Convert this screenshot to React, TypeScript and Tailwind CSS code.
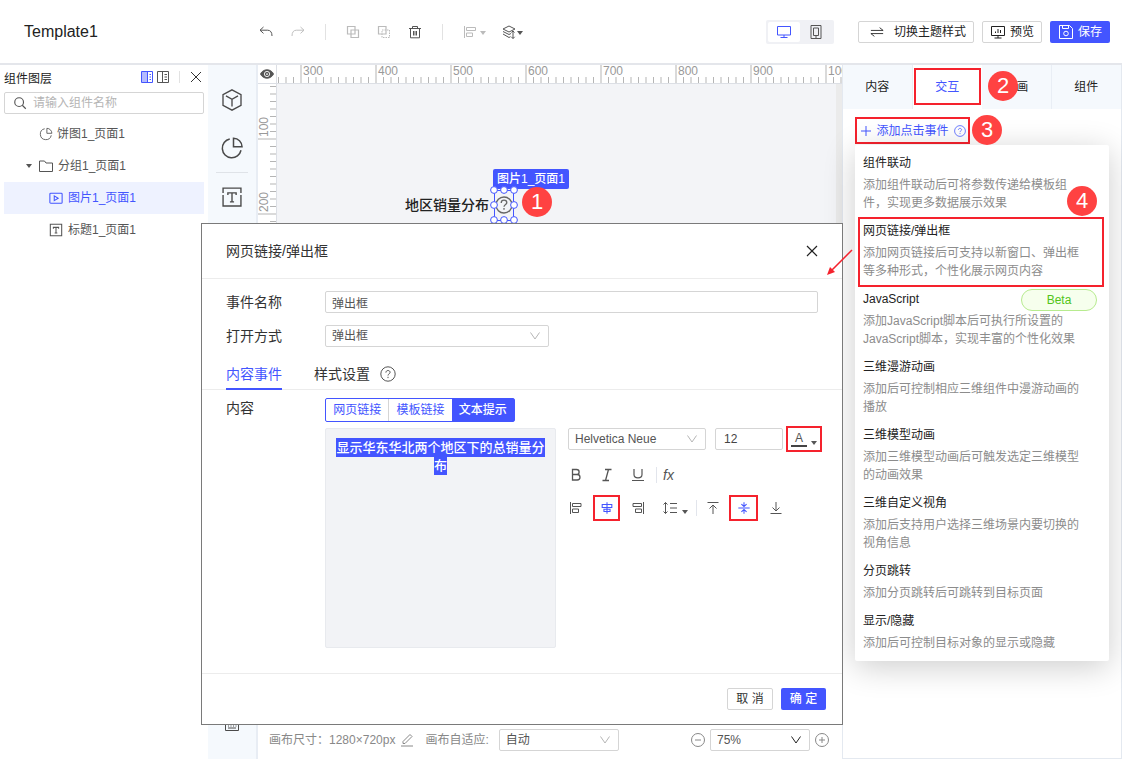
import type { ReactNode } from "react";

const HANDLES = [
  [4, 4],
  [14, 4],
  [24, 4],
  [4, 19],
  [24, 19],
  [4, 34],
  [14, 34],
  [24, 34],
];

const EVENTS = [
  { title: "组件联动", desc: "添加组件联动后可将参数传递给模板组件，实现更多数据展示效果" },
  { title: "网页链接/弹出框", desc: "添加网页链接后可支持以新窗口、弹出框等多种形式，个性化展示网页内容", marked: true },
  { title: "JavaScript", desc: "添加JavaScript脚本后可执行所设置的JavaScript脚本，实现丰富的个性化效果", beta: true },
  { title: "三维漫游动画", desc: "添加后可控制相应三维组件中漫游动画的播放" },
  { title: "三维模型动画", desc: "添加三维模型动画后可触发选定三维模型的动画效果" },
  { title: "三维自定义视角", desc: "添加后支持用户选择三维场景内要切换的视角信息" },
  { title: "分页跳转", desc: "添加分页跳转后可跳转到目标页面" },
  { title: "显示/隐藏", desc: "添加后可控制目标对象的显示或隐藏" },
];

interface IconProps {
  children: ReactNode;
  className?: string;
  box?: string;
}

function Icon({ children, className = "size-4", box = "0 0 16 16" }: IconProps) {
  return (
    <svg viewBox={box} className={`shrink-0 ${className}`} fill="none" stroke="currentColor" aria-hidden="true">
      {children}
    </svg>
  );
}

function Caret({ className = "" }: { className?: string }) {
  return (
    <Icon className={`h-1 w-1.5 ${className}`} box="0 0 6 4">
      <path d="M0 0h6L3 4z" fill="currentColor" stroke="none" />
    </Icon>
  );
}

function PieIcon({ className }: { className?: string }) {
  return (
    <Icon className={className}>
      <path d="M6.5 2A6.3 6.3 0 1 0 14 9.5" />
      <path d="M9 1.5V7.2h5.7A5.8 5.8 0 0 0 9 1.5z" />
    </Icon>
  );
}

function TextIcon({ className }: { className?: string }) {
  return (
    <Icon className={className}>
      <path d="M1.5 5V1.5h13V5M1.5 6.5v8h13v-8" />
      <path d="M5 6.5V5h6v1.5M8 5v6.5M6.5 11.5h3" />
    </Icon>
  );
}

function HelpIcon({ className }: { className?: string }) {
  return (
    <Icon className={className}>
      <circle cx="8" cy="8" r="7.2" />
      <path d="M5.9 6.6c0-1.3.9-2.1 2.1-2.1s2.1.8 2.1 1.9c0 1.3-2.1 1.5-2.1 3.1" />
      <path d="M8 10.8v1.3" />
    </Icon>
  );
}

function Badge({ n, className }: { n: number; className: string }) {
  return (
    <span
      className={`absolute z-30 flex size-[30px] items-center justify-center rounded-full bg-[#ff4242] text-[22px] leading-none text-white ${className}`}
    >
      {n}
    </span>
  );
}

interface SelectBoxProps {
  id: string;
  label: string;
  value: string;
  className: string;
  arrow?: string;
}

function SelectBox({ id, label, value, className, arrow = "text-[#b5b5b5]" }: SelectBoxProps) {
  return (
    <div className={`relative flex h-[22px] items-center rounded-xs border border-[#d5d5d5] bg-white ${className}`}>
      <select id={id} aria-label={label} className="h-full w-full appearance-none bg-transparent px-1.5 text-xs text-[#555]">
        <option>{value}</option>
      </select>
      <Icon className={`pointer-events-none absolute right-2 h-2 w-2.5 ${arrow}`} box="0 0 10 8">
        <path d="M.5 .5 5 7 9.5 .5" />
      </Icon>
    </div>
  );
}

function TopBar() {
  return (
    <header className="flex h-[65px] shrink-0 items-center border-b-2 border-[#e4e6eb] pr-3 pl-6">
      <h1 className="w-[234px] text-base text-[#222]">Template1</h1>
      <div className="flex flex-1 items-center text-[#555]">
        <button aria-label="撤销">
          <Icon>
            <path d="M5.5 3 2 6.2l3.5 3.2M2 6.2h7.5c3 0 4.5 2 4.5 5.8" />
          </Icon>
        </button>
        <button aria-label="重做" className="ml-4 text-[#c0c0c0]">
          <Icon>
            <path d="M10.5 3 14 6.2l-3.5 3.2M14 6.2H6.5c-3 0-4.5 2-4.5 5.8" />
          </Icon>
        </button>
        <span className="mx-[19px] h-4 w-px bg-[#e2e2e2]" />
        <button aria-label="组合" className="text-[#bbb]">
          <Icon>
            <path d="M2.5 2.5h7.5V10H2.5zM6 6h7.5v7.5H6z" strokeWidth="1.2" />
          </Icon>
        </button>
        <button aria-label="取消组合" className="ml-[15px] text-[#bbb]">
          <Icon>
            <path d="M2.5 2.5H10V10H2.5z" strokeWidth="1.2" />
            <path d="M6 6h7.5v7.5H6z" strokeDasharray="1.5 1" />
          </Icon>
        </button>
        <button aria-label="删除" className="ml-[15px]">
          <Icon>
            <path d="M2 4.5h12M5.5 4.5v-2h5v2M3.5 4.5v9.3h9V4.5M6.5 7v4.5M8 7v4.5M9.5 7v4.5" />
          </Icon>
        </button>
        <span className="mx-[19px] h-4 w-px bg-[#e2e2e2]" />
        <button aria-label="对齐" className="flex items-center gap-0.5 text-[#bbb]">
          <Icon>
            <path d="M2.5 2v12M4.5 3.5h9v3h-9zM4.5 9h6v3.5h-6z" />
          </Icon>
          <Caret className="mt-0.5" />
        </button>
        <button aria-label="图层" className="ml-[15px] flex items-center">
          <Icon>
            <path d="M8 2 14 5 8 8 2 5zM2 7.5 8 10.5l2-1M2 10l6 3.5 1.5-.8M12 7v7.5M10.3 12.8l1.7 1.7 1.7-1.7M10.5 8.5 12 7l1.5 1.5" />
          </Icon>
          <Caret className="mt-0.5" />
        </button>
      </div>
      <div className="flex h-6 items-center rounded-xs bg-[#f0f1f5] p-0.5">
        <button aria-label="电脑" className="flex h-5 w-8 items-center justify-center rounded-xs bg-white text-[#4355ff]">
          <Icon>
            <path d="M1.5 2.5h13v8.5h-13zM8 11v2.5M4.5 13.5h7" />
          </Icon>
        </button>
        <button aria-label="手机" className="flex h-5 w-8 items-center justify-center text-[#555]">
          <Icon>
            <path d="M3 1.5h10v13H3zM5.5 4h5v7.5h-5zM7 13h2" />
          </Icon>
        </button>
      </div>
      <div className="ml-6 flex gap-2 text-xs text-[#222]">
        <button className="flex h-[22px] w-[116px] items-center justify-center gap-2.5 rounded-xs border border-[#d5d5d5] pl-1">
          <Icon className="size-3.5">
            <path d="M1 6.2h14L11 3M15 9.8H1L5 13" />
          </Icon>
          切换主题样式
        </button>
        <button className="flex h-[22px] w-[60px] items-center justify-center gap-1 rounded-xs border border-[#d5d5d5]">
          <Icon>
            <path d="M1.5 2.5h13v9h-13zM8 11.5V14M4.5 14h7M5.5 7.5V9M8 5v4M10.5 6v3" />
          </Icon>
          预览
        </button>
        <button className="flex h-[22px] w-[60px] items-center justify-center gap-1 rounded-xs bg-[#4355ff] text-white">
          <Icon>
            <path d="M1.5 1.5h10l3 3v10h-13zM4.5 1.5v3h6v-3" />
            <circle cx="8" cy="9.5" r="2.3" />
          </Icon>
          保存
        </button>
      </div>
    </header>
  );
}

function LayerPanel() {
  return (
    <aside className="flex w-52 shrink-0 flex-col px-1 text-xs">
      <div className="flex h-[27px] items-center pb-1">
        <h2 className="flex-1 pt-1 text-[#222]">组件图层</h2>
        <button aria-label="左侧停靠" className="text-[#4355ff]">
          <Icon className="size-3" box="0 0 12 12">
            <path d="M.5 .5h11v11H.5zM6.5 .5v11M8.5 3.5h1.5M8.5 6h1.5M8.5 8.5h1.5" />
            <path d="M1 1h5v10H1z" fill="currentColor" fillOpacity=".4" stroke="none" />
          </Icon>
        </button>
        <button aria-label="右侧停靠" className="ml-1 text-[#555]">
          <Icon className="size-3" box="0 0 12 12">
            <path d="M.5 .5h11v11H.5zM5.5 .5v11M7.5 3.5H10M7.5 6H10M7.5 8.5H10" />
          </Icon>
        </button>
        <span className="mx-2.5 h-3 w-px bg-[#e2e2e2]" />
        <button aria-label="关闭" className="mr-0.5 text-[#333]">
          <Icon className="size-3" box="0 0 12 12">
            <path d="m1 1 10 10M11 1 1 11" />
          </Icon>
        </button>
      </div>
      <label className="flex h-[22px] items-center gap-1.5 rounded-xs border border-[#d5d5d5] px-2 text-[#555]">
        <Icon className="size-3.5">
          <circle cx="7" cy="7" r="5" strokeWidth="1.3" />
          <path d="m10.6 10.6 4 4" strokeWidth="1.3" />
        </Icon>
        <input aria-label="搜索组件" placeholder="请输入组件名称" className="min-w-0 flex-1 placeholder:text-[#b5b5b5]" />
      </label>
      <ul className="mt-1 text-[#555]">
        <li className="flex h-8 items-center gap-1 pl-[35px]">
          <PieIcon className="size-3.5" />
          饼图1_页面1
        </li>
        <li className="flex h-8 items-center pl-[22px]">
          <Caret className="mr-1.5" />
          <Icon className="mr-1 size-4">
            <path d="M1.5 3h5l1.5 2h6.5v8.5h-13z" />
          </Icon>
          分组1_页面1
        </li>
        <li className="flex h-8 items-center gap-[5px] bg-[#eef2ff] pl-[45px] text-[#4355ff]">
          <Icon className="size-3.5">
            <rect x="1" y="2.5" width="14" height="11.5" rx="1" strokeWidth="1.2" />
            <path d="M6 5.5v5.5L10.5 8.2z" strokeWidth="1.2" />
          </Icon>
          图片1_页面1
        </li>
        <li className="flex h-8 items-center gap-[5px] pl-[45px]">
          <Icon className="size-3.5">
            <path d="M1.5 1.5h13v13h-13zM5 6.5V5h6v1.5M8 5v6.5M6.5 11.5h3" strokeWidth="1.2" />
          </Icon>
          标题1_页面1
        </li>
      </ul>
    </aside>
  );
}

function ToolStrip() {
  return (
    <nav className="flex w-[50px] shrink-0 flex-col items-center border-r-2 border-[#e8edf4] bg-[#f5f9fd] pt-[23px] text-[#4a4a4a]">
      <button aria-label="三维组件">
        <Icon className="size-6">
          <path d="m8 1.2 6 3.3v7L8 14.8l-6-3.3v-7zM4 5.2l4 2.3 4-2.3M8 7.5v4.8" strokeWidth=".9" />
        </Icon>
      </button>
      <button aria-label="图表" className="mt-6">
        <PieIcon className="size-6" />
      </button>
      <span className="mt-3 h-px w-8 bg-[#dfe3e8]" />
      <button aria-label="文本" className="mt-[13px]">
        <TextIcon className="size-[22px]" />
      </button>
      <button aria-label="快捷键" className="mt-auto mb-[27px]">
        <Icon>
          <path d="M1.5 2.5h13v12h-13zM4 10h1M6.5 10h1M9 10h1M11.5 10h1M4 12h8" />
        </Icon>
      </button>
    </nav>
  );
}

function HorizontalRuler() {
  const ticks = Array.from({ length: 78 }, (_, i) => 1.5 + i * 7.5);
  return (
    <svg className="h-[19px] min-w-0 flex-1" aria-label="水平标尺">
      {ticks.map((x, i) => (
        <line key={x} x1={x} x2={x} y1={i % 10 === 3 ? 0 : 12} y2="18" stroke="#b5b5b5" />
      ))}
      {[300, 400, 500, 600, 700, 800, 900, 1000].map((n, i) => (
        <text key={n} x={26 + i * 75} y="10" fontSize="12" fill="#999">
          {n}
        </text>
      ))}
    </svg>
  );
}

function VerticalRuler() {
  const ticks = Array.from({ length: 85 }, (_, i) => 2.5 + i * 7.5);
  return (
    <svg className="w-[19px] shrink-0 border-r border-[#dcdfe5]" aria-label="垂直标尺">
      {ticks.map((y, i) => (
        <line key={y} y1={y} y2={y} x1={i % 10 === 7 ? 0 : 12} x2="18" stroke="#b5b5b5" />
      ))}
      {[100, 200, 300, 400, 500, 600, 700, 800].map((n, i) => (
        <text key={n} transform={`translate(10 ${53 + i * 75}) rotate(-90)`} fontSize="12" fill="#999">
          {n}
        </text>
      ))}
    </svg>
  );
}

function Canvas() {
  return (
    <main className="flex min-w-0 flex-1 flex-col">
      <div className="flex h-[19px] shrink-0 border-b border-[#dcdfe5]">
        <button aria-label="显示标尺" className="flex w-[19px] items-center justify-center border-r border-[#dcdfe5] text-[#555]">
          <Icon className="size-3.5">
            <path d="M.5 8C3.5 1.5 12.5 1.5 15.5 8 12.5 14.5 3.5 14.5 .5 8z" fill="currentColor" />
            <circle cx="8" cy="8" r="3" stroke="white" />
            <circle cx="8" cy="8" r="1" fill="white" stroke="none" />
          </Icon>
        </button>
        <HorizontalRuler />
      </div>
      <div className="flex min-h-0 flex-1">
        <VerticalRuler />
        <div className="relative flex-1 border-r-[6px] border-[#ebebeb] bg-[#f3f4f7]">
          <span className="absolute top-[111px] left-[128px] text-sm font-medium whitespace-nowrap text-[#222]">
            地区销量分布
          </span>
          <span className="absolute top-[85px] left-[216px] flex h-5 items-center rounded-xs bg-[#4355ff] px-1 text-xs font-medium whitespace-nowrap text-white">
            图片1_页面1
          </span>
          <svg className="absolute top-[102px] left-[213px] h-[38px] w-7" fill="none" stroke="#4355ff" aria-hidden="true">
            <g stroke="#666">
              <circle cx="14" cy="19" r="8" strokeWidth="1.4" />
              <path
                d="M11.2 17c0-1.7 1.2-2.8 2.8-2.8s2.8 1.1 2.8 2.5c0 1.7-2.8 2-2.8 4.1M14 22v1.8"
                strokeWidth="1.3"
              />
            </g>
            <path d="M4.5 4.5h19v30h-19z" />
            {HANDLES.map(([x, y]) => (
              <circle key={`${x}-${y}`} cx={x} cy={y} r="3.4" fill="white" />
            ))}
          </svg>
          <Badge n={1} className="top-[103px] left-[245px]" />
        </div>
      </div>
      <footer className="flex h-[38px] shrink-0 items-center pr-3 pl-[11px] text-xs text-[#888]">
        <span>画布尺寸：1280×720px</span>
        <button aria-label="编辑尺寸" className="ml-1">
          <Icon>
            <path d="M4 9.5 11 2.5l2 2-7 7H4zM2 14h12" />
          </Icon>
        </button>
        <label htmlFor="fit" className="mr-2.5 ml-2.5">
          画布自适应:
        </label>
        <SelectBox id="fit" label="画布自适应" value="自动" className="w-[120px]" />
        <span className="flex-1" />
        <button aria-label="缩小">
          <Icon>
            <circle cx="8" cy="8" r="6.5" />
            <path d="M5 8h6" />
          </Icon>
        </button>
        <SelectBox id="zoom" label="缩放" value="75%" className="mx-1 w-[100px]" arrow="text-[#222]" />
        <button aria-label="放大">
          <Icon>
            <circle cx="8" cy="8" r="6.5" />
            <path d="M5 8h6M8 5v6" />
          </Icon>
        </button>
      </footer>
    </main>
  );
}

function EventMenu() {
  return (
    <ul className="absolute top-7 left-0 w-[254px] rounded-xs bg-white py-1 text-xs shadow-[0_6px_32px_rgba(0,0,0,0.2)]">
      {EVENTS.map((item) => (
        <li key={item.title} className="relative px-2 py-[5px]">
          <h3 className="leading-[18px] text-[#222]">{item.title}</h3>
          <p className="mt-1 w-[220px] leading-[18px] text-[#8c8c8c]">{item.desc}</p>
          {item.beta && (
            <span className="absolute top-1 right-3 flex h-[22px] w-[76px] items-center justify-center rounded-full border border-[#b7eb8f] bg-[#f6ffed] text-[#52c41a]">
              Beta
            </span>
          )}
          {item.marked && (
            <>
              <span className="absolute top-0 right-[5px] -bottom-0.5 left-[3px] border-2 border-[#f5222d]" />
              <Badge n={4} className="-top-[31px] right-3" />
            </>
          )}
        </li>
      ))}
    </ul>
  );
}

function PropertyPanel() {
  const tab = "h-11 border-r border-[#e9eef5] bg-[#f5f9fd]";
  return (
    <aside className="relative z-10 w-[280px] shrink-0 border-x border-b border-[#e4e9f0] bg-white text-xs text-[#222]">
      <div className="grid grid-cols-4">
        <button className={tab}>内容</button>
        <button className="relative h-11 text-[#4355ff]">
          交互
          <span className="absolute inset-x-px top-[3px] bottom-1 border-2 border-[#f5222d]" />
        </button>
        <button className={`relative ${tab}`}>
          动画
          <Badge n={2} className="top-1.5 left-1.5" />
        </button>
        <button className="h-11 bg-[#f5f9fd]">组件</button>
      </div>
      <div className="relative mt-2 ml-3">
        <button className="flex h-[27px] w-[115px] items-center justify-between border-2 border-[#f5222d] pr-0.5 pl-1 whitespace-nowrap text-[#4355ff]">
          <Icon className="size-2.5" box="0 0 10 10">
            <path d="M0 5h10M5 0v10" />
          </Icon>
          添加点击事件
          <HelpIcon className="size-3" />
        </button>
        <Badge n={3} className="-top-0.5 left-[117px]" />
        <EventMenu />
      </div>
    </aside>
  );
}

function FormatTools() {
  return (
    <div className="ml-3 text-[#555]">
      <div className="flex h-[22px] items-center">
        <SelectBox id="font" label="字体" value="Helvetica Neue" className="w-[138px]" />
        <input
          aria-label="字号"
          defaultValue="12"
          className="ml-[9px] h-[22px] w-[68px] rounded-xs border border-[#d5d5d5] px-2 text-xs text-[#444]"
        />
        <button aria-label="字体颜色" className="ml-[3px] flex h-[26px] w-9 items-center justify-center gap-1 border-2 border-[#f5222d]">
          <span className="border-b-2 border-[#444] px-1 text-xs leading-[14px]">A</span>
          <Caret className="mt-2" />
        </button>
      </div>
      <div className="mt-[14px] flex h-[22px] items-center">
        <button aria-label="加粗">
          <Icon>
            <path d="M4.5 2.5h4c3.5 0 3.5 5 0 5h-4zM4.5 7.5h4.7c3.7 0 3.7 5.5 0 5.5H4.5z" strokeWidth="1.3" />
          </Icon>
        </button>
        <button aria-label="斜体" className="ml-[15px]">
          <Icon>
            <path d="M6 2.5h6.5M3.5 13.5H10M9.5 2.5l-3 11" strokeWidth="1.3" />
          </Icon>
        </button>
        <button aria-label="下划线" className="ml-[15px]">
          <Icon>
            <path d="M4 2v5.5c0 4.5 8 4.5 8 0V2M2 13.5h12" strokeWidth="1.2" />
          </Icon>
        </button>
        <span className="ml-2.5 h-4 w-px bg-[#e2e5ec]" />
        <button aria-label="函数" className="ml-1.5 text-sm leading-4 italic">
          fx
        </button>
      </div>
      <div className="mt-[11px] flex h-[22px] items-center">
        <button aria-label="左对齐">
          <Icon>
            <path d="M2.5 2v12M4.5 3.5h8.5v3H4.5zM4.5 9h6v3.5h-6z" />
          </Icon>
        </button>
        <button aria-label="居中" className="ml-[9px] flex h-[26px] w-[27px] items-center justify-center border-2 border-[#f5222d] text-[#4355ff]">
          <Icon className="size-3.5">
            <path d="M8 1.5v13M2.5 4h11v3.5h-11zM4.5 9.5h7V12h-7z" strokeWidth="1.2" />
          </Icon>
        </button>
        <button aria-label="右对齐" className="ml-2.5">
          <Icon>
            <path d="M13.5 2v12M3 3.5h8.5v3H3zM5.5 9h6v3.5h-6z" />
          </Icon>
        </button>
        <button aria-label="行高" className="ml-4 flex items-center gap-1">
          <Icon>
            <path d="M3.5 2.5v11M1.5 4.5l2-2 2 2M1.5 11.5l2 2 2-2M8 3.5h7M8 8h7M8 12.5h7" />
          </Icon>
          <Caret className="mt-2" />
        </button>
        <span className="mx-2 h-4 w-px bg-[#e2e5ec]" />
        <button aria-label="顶部对齐">
          <Icon>
            <path d="M2.5 2.5h11M8 14V5M4.5 8.5 8 5l3.5 3.5" />
          </Icon>
        </button>
        <button aria-label="垂直居中" className="ml-2 flex h-[26px] w-[29px] items-center justify-center border-2 border-[#f5222d] text-[#4355ff]">
          <Icon className="size-3.5">
            <path d="M1.5 8h13M8 1.5V6M5 3.5 8 6.2l3-2.7M8 14.5V10M5 12.5 8 9.8l3 2.7" strokeWidth="1.2" />
          </Icon>
        </button>
        <button aria-label="底部对齐" className="ml-2.5">
          <Icon>
            <path d="M2.5 13.5h11M8 2v9M4.5 7.5 8 11l3.5-3.5" />
          </Icon>
        </button>
      </div>
    </div>
  );
}

function LinkDialog() {
  const input = "h-[22px] rounded-xs border border-[#d5d5d5] px-1.5 text-xs text-[#555]";
  return (
    <section
      role="dialog"
      aria-label="网页链接/弹出框"
      className="absolute top-[223px] left-[201px] z-20 flex h-[502px] w-[642px] flex-col border border-[#7a7a7a] bg-white text-sm text-[#333]"
    >
      <div className="flex h-[55px] items-center justify-between border-b border-[#ececec] px-6">
        <h2>网页链接/弹出框</h2>
        <button aria-label="关闭弹窗" className="text-[#222]">
          <Icon className="size-3" box="0 0 12 12">
            <path d="m1 1 10 10M11 1 1 11" strokeWidth="1.2" />
          </Icon>
        </button>
      </div>
      <div className="mt-3 flex h-[22px] items-center px-6">
        <label htmlFor="event-name" className="w-[99px]">
          事件名称
        </label>
        <input id="event-name" defaultValue="弹出框" className={`flex-1 ${input}`} />
      </div>
      <div className="mt-3 flex h-[22px] items-center px-6">
        <label htmlFor="open-mode" className="w-[99px]">
          打开方式
        </label>
        <SelectBox id="open-mode" label="打开方式" value="弹出框" className="w-56" />
      </div>
      <div className="mt-3 flex h-[31px] border-b border-[#ececec] px-6">
        <button className="h-[31px] border-b-2 border-[#4355ff] text-[#4355ff]">内容事件</button>
        <button className="ml-8 flex items-center gap-2.5">
          样式设置
          <HelpIcon className="size-4 text-[#555]" />
        </button>
      </div>
      <div className="mt-2 flex flex-1 pl-6">
        <span className="w-[99px] shrink-0">内容</span>
        <div>
          <div className="flex h-6 w-[190px] rounded-xs border border-[#4355ff] text-xs text-[#4355ff]">
            <button className="flex-1 border-r border-[#d5d5d5]">网页链接</button>
            <button className="flex-1">模板链接</button>
            <button className="flex-1 bg-[#4355ff] font-medium text-white">文本提示</button>
          </div>
          <div className="mt-1.5 flex">
            <div
              role="textbox"
              aria-label="文本提示内容"
              tabIndex={0}
              className="h-[220px] w-[231px] rounded-xs border border-[#e8eaee] bg-[#f2f3f6] p-2.5 text-center text-[13px] leading-[18px] font-medium text-white"
            >
              <span className="box-decoration-clone bg-[#4355ff] py-0.5">显示华东华北两个地区下的总销量分布</span>
            </div>
            <FormatTools />
          </div>
        </div>
      </div>
      <div className="flex h-[51px] items-center justify-end gap-2 border-t border-[#ececec] px-4 text-xs">
        <button className="h-[22px] w-[46px] rounded-xs border border-[#d5d5d5]">取 消</button>
        <button className="h-[22px] w-[45px] rounded-xs bg-[#4355ff] font-medium text-white">确 定</button>
      </div>
    </section>
  );
}

export default function App() {
  return (
    <div className="relative flex h-screen min-h-[740px] flex-col overflow-hidden bg-white font-['Liberation_Sans','Noto_Sans_CJK_SC',sans-serif]">
      <TopBar />
      <div className="flex min-h-0 flex-1">
        <LayerPanel />
        <ToolStrip />
        <Canvas />
        <PropertyPanel />
      </div>
      <LinkDialog />
      <svg className="absolute top-[248px] left-[826px] z-20 size-7" stroke="#f5222d" fill="#f5222d" aria-hidden="true">
        <path d="M26 2 5 23" strokeWidth="1.5" />
        <path d="m1 27 3-8 5 5z" stroke="none" />
      </svg>
    </div>
  );
}
